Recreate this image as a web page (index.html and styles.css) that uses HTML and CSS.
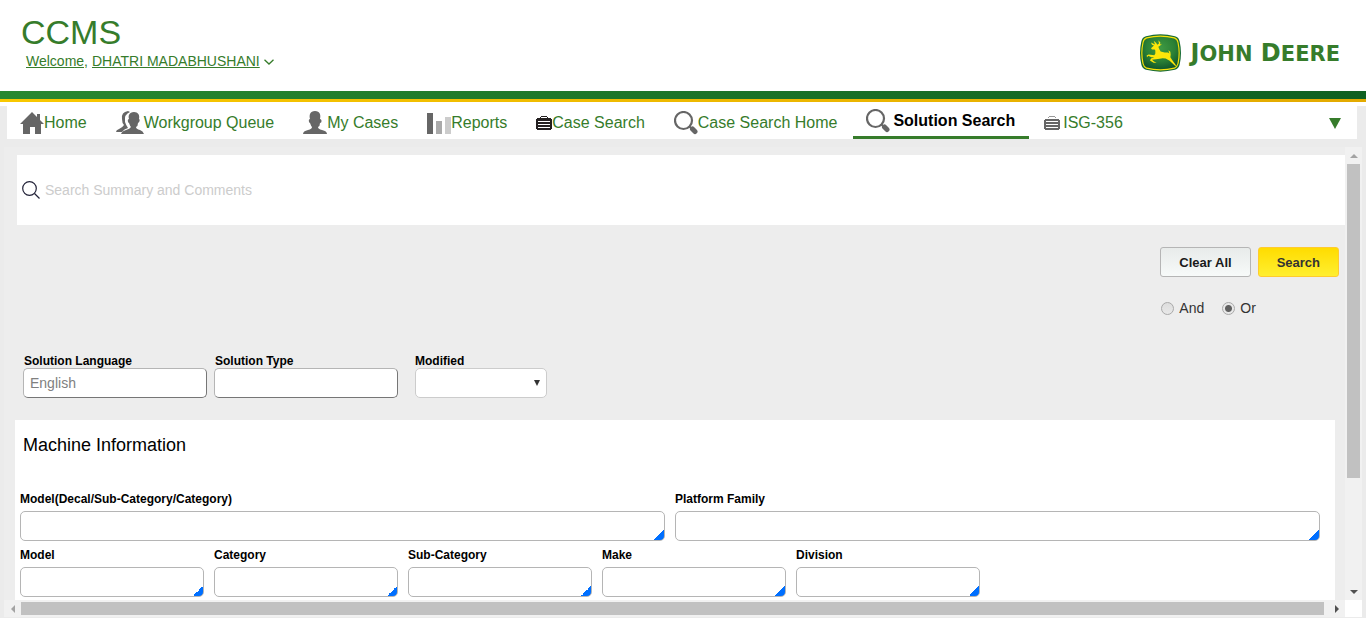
FILE: index.html
```html
<!DOCTYPE html>
<html lang="en">
<head>
<meta charset="utf-8">
<meta name="viewport" content="width=device-width, initial-scale=1">
<title>CCMS - Solution Search</title>
<link rel="stylesheet" href="styles.css">
</head>
<body>
<div class="page">
  <header class="header">
    <div class="identity">
      <h1 class="app-name">CCMS</h1>
      <div class="welcome">
        <a href="#profile">Welcome,</a>
        <a href="#profile">DHATRI MADABHUSHANI</a>
        <svg class="chevron" viewBox="0 0 10 6" aria-hidden="true"><path d="M.5.8 5 5 9.500.8" fill="none" stroke="#367c2b" stroke-width="1.300"/></svg>
      </div>
    </div>
    <a class="brand" href="#home" aria-label="John Deere">
      <svg class="badge" viewBox="0 0 123 113" aria-hidden="true">
        <defs>
          <radialGradient id="shield" cx=".5" cy=".35" r=".7">
            <stop offset="0" stop-color="#3f9a43"/><stop offset=".55" stop-color="#2a8035"/><stop offset="1" stop-color="#0c4f27"/>
          </radialGradient>
        </defs>
        <path d="M18 6Q61-5 105 6Q117 9 119 22Q127 57 119 91Q117 103 105 107Q61 118 18 107Q6 103 4 91Q-4 57 4 22Q6 9 18 6Z" fill="#176b34"/>
        <path d="M20 11Q61 1 103 11Q112 14 114 25Q121 57 114 88Q112 98 103 102Q61 112 20 102Q11 98 9 88Q2 57 9 25Q11 14 20 11Z" fill="url(#shield)" stroke="#f7e10a" stroke-width="3.500"/>
        <path d="M33 42L42 34L36 32L33 25L39 28L45 31L41 20L48 26L52 32L57 28L55 18L61 25L60 31L66 29L60 35L55 38L58 45L62 52L74 55L84 55L88 58L85 48L91 53L92 62L91 69L97 78L110 96L104 94L89 80L77 73L68 72L59 74L48 75L36 77L42 82L50 86L41 86L30 79L33 73L43 69L34 69L25 65L21 69L20 64L26 61L43 63L46 58L46 49L44 46L36 46Z" fill="#ffe60a"/>
      </svg>
      <span class="brand-name">J<span class="small">OHN</span> D<span class="small">EERE</span></span>
    </a>
  </header>
  <div class="stripe"></div>

  <nav class="tabs" aria-label="Main">
    <a class="tab" href="#home">
      <svg class="icon-24" viewBox="0 0 24 24" aria-hidden="true"><path d="M12 1 0 13h3v10h7v-7h5v7h6V13h3l-4-4V3h-3v3Z" fill="#666"/></svg>Home</a>
    <a class="tab" href="#queue">
      <svg class="icon-28" viewBox="0 0 28 24" aria-hidden="true"><path d="M12 0Q5 1 6 8Q6 12 8 14Q7 16 3 18Q0 19 0 21H6Q8 18 12 17Q10 14 9 11Q8 3 14 1Z" fill="#666"/><path d="M18 1C13 1 12 5 13 8C11 8 12 12 13 12Q14 15 15 16Q14 18 10 19Q6 20 5 23H28Q27 20 24 19Q20 18 20 16Q22 15 22 12C24 11 24 8 23 8C24 4 22 1 18 1Z" fill="#666"/></svg>Workgroup Queue</a>
    <a class="tab" href="#cases">
      <svg class="icon-24" viewBox="0 0 24 24" aria-hidden="true"><path d="M12 0C7 0 6 4 7 8C5 8 6 12 7 12Q8 15 9 16Q9 18 5 19Q0 20 0 23H24Q24 20 19 19Q15 18 15 16Q17 15 17 12C19 12 19 8 17 8C18 4 17 0 12 0Z" fill="#666"/></svg>My Cases</a>
    <a class="tab" href="#reports">
      <svg class="icon-24" viewBox="0 0 24 24" aria-hidden="true"><path d="M0 2h6v21H0Z" fill="#666"/><path d="M9 10h6v13H9Z" fill="#aaa"/><path d="M18 6h6v17h-6Z" fill="#ccc"/></svg>Reports</a>
    <a class="tab" href="#case-search">
      <svg class="icon-16" viewBox="0 0 16 16" shape-rendering="crispEdges" aria-hidden="true"><path d="M5 1h6v1H5ZM4 2h1v1H4ZM11 2h1v1h-1ZM1 3h14v1h1v10h-1v1H1v-1H0V4h1Z" fill="#231f20"/><path d="M2 6h12v1H2ZM2 9h12v1H2ZM2 12h12v1H2Z" fill="#fff"/></svg>Case Search</a>
    <a class="tab" href="#case-search-home">
      <svg class="icon-24" viewBox="0 0 24 24" aria-hidden="true"><circle cx="9.500" cy="9.500" r="8.500" fill="none" stroke="#666" stroke-width="2.200"/><path d="m15 15 3 3" stroke="#666" stroke-width="2"/><path d="m18.500 18 2.500 2.500" stroke="#666" stroke-width="5" stroke-linecap="round"/></svg>Case Search Home</a>
    <a class="tab active" href="#solution-search" aria-current="page">
      <svg class="icon-24" viewBox="0 0 24 24" aria-hidden="true"><circle cx="9.500" cy="9.500" r="8.500" fill="none" stroke="#666" stroke-width="2.200"/><path d="m15 15 3 3" stroke="#666" stroke-width="2"/><path d="m18.500 18 2.500 2.500" stroke="#666" stroke-width="5" stroke-linecap="round"/></svg>Solution Search</a>
    <a class="tab record" href="#isg-356">
      <svg class="icon-16" viewBox="0 0 16 16" shape-rendering="crispEdges" aria-hidden="true"><path d="M5 1h6v1H5ZM4 2h1v1H4ZM11 2h1v1h-1Z" fill="#999"/><path d="M1 4h14v1h1v9h-1v1H1v-1H0V5h1Z" fill="#666"/><path d="M2 6h12v1H2ZM2 9h12v1H2ZM2 12h12v1H2Z" fill="#fff"/></svg>ISG-356</a>
    <button class="more" type="button" aria-label="More tabs"><svg viewBox="0 0 12 12" aria-hidden="true"><path d="M0 1h12L6 12Z" fill="#367c2b"/></svg></button>
  </nav>

  <div class="frame">
    <main class="content">
      <div class="search-bar">
        <svg class="search-icon" viewBox="0 0 18 18" aria-hidden="true"><circle cx="7.500" cy="7.500" r="6.800" fill="none" stroke="#222238" stroke-width="1.200"/><path d="m12.500 12.500 5 5" stroke="#222238" stroke-width="1.300"/></svg>
        <input class="search-input" type="text" placeholder="Search Summary and Comments" aria-label="Search Summary and Comments">
      </div>

      <div class="actions">
        <div class="buttons">
          <button class="button" type="button">Clear All</button>
          <button class="button primary" type="button">Search</button>
        </div>
        <div class="radios">
          <label class="choice"><input type="radio" name="match">And</label>
          <label class="choice"><input type="radio" name="match" checked>Or</label>
        </div>
      </div>

      <div class="filters">
        <div class="filter"><label for="language">Solution Language</label><input class="box inset" id="language" type="text" placeholder="English"></div>
        <div class="filter"><label for="type">Solution Type</label><input class="box inset" id="type" type="text"></div>
        <div class="filter modified"><label for="modified">Modified</label><select class="box" id="modified"><option></option></select></div>
      </div>

      <section class="machine">
        <h2 class="section-title">Machine Information</h2>
        <div class="row">
          <div class="field wide"><label for="decal">Model(Decal/Sub-Category/Category)</label><input class="box lookup" id="decal" type="text"></div>
          <div class="field wide"><label for="platform">Platform Family</label><input class="box lookup" id="platform" type="text"></div>
        </div>
        <div class="row">
          <div class="field"><label for="model">Model</label><input class="box lookup" id="model" type="text"></div>
          <div class="field"><label for="category">Category</label><input class="box lookup" id="category" type="text"></div>
          <div class="field"><label for="subcategory">Sub-Category</label><input class="box lookup" id="subcategory" type="text"></div>
          <div class="field"><label for="make">Make</label><input class="box lookup" id="make" type="text"></div>
          <div class="field"><label for="division">Division</label><input class="box lookup" id="division" type="text"></div>
        </div>
      </section>
    </main>
    <div class="scroll vertical">
      <button class="arrow" type="button" aria-label="Scroll up"><svg viewBox="0 0 8 8" aria-hidden="true"><path d="M0 6h8L4 2Z" fill="#a3a3a3"/></svg></button>
      <div class="track"><div class="thumb"></div></div>
      <button class="arrow" type="button" aria-label="Scroll down"><svg viewBox="0 0 8 8" aria-hidden="true"><path d="M0 2h8L4 6Z" fill="#505050"/></svg></button>
    </div>
    <div class="scroll horizontal">
      <button class="arrow" type="button" aria-label="Scroll left"><svg viewBox="0 0 8 8" aria-hidden="true"><path d="M6 0v8L2 4Z" fill="#a3a3a3"/></svg></button>
      <div class="track"><div class="thumb"></div></div>
      <button class="arrow" type="button" aria-label="Scroll right"><svg viewBox="0 0 8 8" aria-hidden="true"><path d="M2 0v8L6 4Z" fill="#505050"/></svg></button>
    </div>
    <div class="corner"></div>
  </div>
</div>
</body>
</html>
```
FILE: styles.css
```css
* { box-sizing: border-box; }

body {
  margin: 0;
  background: #ebebeb;
  color: #000;
  font-family: "Liberation Sans", Arial, sans-serif;
  font-size: 14px;
}

button, input, select { font: inherit; }
svg { display: block; flex: none; }

.page {
  display: flex;
  flex-direction: column;
  min-height: 100vh;
}

/* Header */
.header {
  display: flex;
  justify-content: space-between;
  align-items: flex-start;
  padding: 13px 26px 19px 21px;
  background: #fff;
}
.app-name {
  margin: 0 0 1px;
  color: #367c2b;
  font-size: 34px;
  font-weight: 400;
  line-height: 38px;
}
.welcome {
  display: flex;
  align-items: center;
  gap: 4px;
  padding-left: 5px;
  line-height: 19px;
}
.welcome a { color: #367c2b; }
.chevron { width: 10px; height: 6px; }

.brand {
  display: flex;
  align-items: center;
  gap: 10px;
  height: 59px;
  padding-top: 21px;
  color: #367c2b;
  text-decoration: none;
}
.badge { width: 41px; height: 38px; }
.brand-name {
  font-family: "DejaVu Sans", sans-serif;
  font-size: 24px;
  font-weight: 700;
  line-height: 38px;
  white-space: nowrap;
}
.small { font-size: 21px; }

.stripe {
  height: 15px;
  border-bottom: 4px solid #fff;
  background:
    linear-gradient(90deg, #f8c800, #e3aa00) bottom / 100% 3px no-repeat,
    linear-gradient(90deg, #288830, #0f6021);
}

/* Tabs */
.tabs {
  display: flex;
  gap: 2px;
  height: 33px;
  margin: 0 9px 8px 7px;
  background: #fff;
}
.tab {
  display: flex;
  align-items: center;
  padding: 0 14px 0 13px;
  color: #367c2b;
  font-size: 16px;
  text-decoration: none;
  white-space: nowrap;
}
.active {
  gap: 3px;
  border-bottom: 3px solid #367c2b;
  color: #000;
  font-weight: 700;
}
.record { gap: 3px; }
.icon-16 { width: 16px; height: 16px; }
.icon-24 { width: 24px; height: 24px; }
.icon-28 { width: 28px; height: 24px; }
.more {
  margin-left: auto;
  padding: 0 16px;
  border: 0;
  background: none;
}
.more svg { width: 12px; height: 12px; }

/* Scrolling frame */
.frame {
  display: grid;
  flex: 1;
  grid-template-columns: minmax(0, 1fr) 17px;
  grid-template-rows: 1fr 17px;
  margin: 0 4px 1px;
  background: #ededed;
}
.content {
  display: flex;
  flex-direction: column;
  overflow: hidden;
}

.search-bar {
  display: flex;
  align-items: center;
  gap: 4px;
  height: 70px;
  margin: 8px 0 0 13px;
  padding-left: 5px;
  background: #fff;
}
.search-icon { width: 18px; height: 18px; }
.search-input {
  flex: 1;
  padding: 0 1px;
  border: 0;
  outline: 0;
}
.search-input::placeholder { color: #ccc; }

.actions {
  align-self: flex-end;
  padding: 22px 6px 0 0;
}
.buttons { display: flex; gap: 7px; }
.button {
  height: 30px;
  padding: 0 18px;
  border: 1px solid #b5b5b5;
  border-radius: 3px;
  background: linear-gradient(#e8ebea, #f7faf9);
  color: #1a1a1a;
  font-size: 13px;
  font-weight: 700;
}
.primary {
  border-color: #ffcb2e;
  background: linear-gradient(#ffdc00, #ffef30);
  color: #333;
}
.radios {
  display: flex;
  gap: 17px;
  padding-top: 22px;
}
.choice {
  display: flex;
  align-items: center;
  gap: 5px;
  color: #333;
  line-height: 18px;
}
.choice input {
  width: 13px;
  height: 13px;
  margin: 0 0 0 1px;
  border: 1px solid #a9a9a9;
  border-radius: 50%;
  appearance: none;
  background: linear-gradient(#ddd, #e8e8e8);
}
.choice input:checked {
  background: radial-gradient(circle, #606060 3px, #e8e8e8 4px);
}

.filters {
  display: flex;
  gap: 7px;
  padding: 37px 0 22px 19px;
}
.filter {
  width: 184px;
  font-size: 12px;
}
.filter label {
  display: block;
  padding-left: 1px;
  font-weight: 700;
  line-height: 14px;
}
.modified {
  width: 132px;
  margin-left: 10px;
}
.modified label { padding-left: 0; }

.box {
  display: block;
  width: 100%;
  height: 30px;
  padding: 0 6px;
  border: 1px solid #b5b5b5;
  border-radius: 5px;
  background: #fff;
  font-size: 14px;
}
.box::placeholder { color: #808080; }
.inset { border-color: #b5b5b5 #767676 #767676 #b5b5b5; }
select.box {
  border-color: #ccc;
  appearance: none;
  background: #fff url("data:image/svg+xml,%3Csvg xmlns='http://www.w3.org/2000/svg' viewBox='0 0 6 6'%3E%3Cpath d='M0 0h6L3 6Z' fill='%23333'/%3E%3C/svg%3E") right 6px center / 6px 6px no-repeat;
}
.lookup {
  background: linear-gradient(135deg, #fff 50%, #006fff 50%) right bottom / 10px 10px no-repeat #fff;
}

/* Machine information */
.machine {
  flex: 1;
  margin: 0 10px 0 11px;
  padding: 14px 15px 3px 5px;
  background: #fff;
}
.section-title {
  margin: 0 0 29px;
  padding-left: 3px;
  font-size: 18px;
  font-weight: 400;
  line-height: 22px;
}
.row { display: flex; gap: 10px; }
.field { width: 184px; }
.wide { flex: 1; }
.field label {
  display: block;
  padding-top: 2px;
  font-size: 12px;
  font-weight: 700;
  line-height: 24px;
}

/* Scrollbars */
.scroll {
  display: flex;
  background: #f1f1f1;
}
.vertical { flex-direction: column; }
.horizontal { grid-row: 2; }
.arrow {
  display: grid;
  flex: none;
  place-items: center;
  width: 17px;
  height: 17px;
  padding: 0;
  border: 0;
  background: none;
}
.arrow svg { width: 8px; height: 8px; }
.track { flex: 1; }
.thumb { background: #c1c1c1; }
.vertical .track {
  display: grid;
  grid-template-rows: 3fr 1fr;
}
.vertical .thumb { margin: 0 2px; }
.horizontal .track { padding: 2px 4px 2px 0; }
.horizontal .thumb { height: 13px; }
.corner { background: #fff; }
```
